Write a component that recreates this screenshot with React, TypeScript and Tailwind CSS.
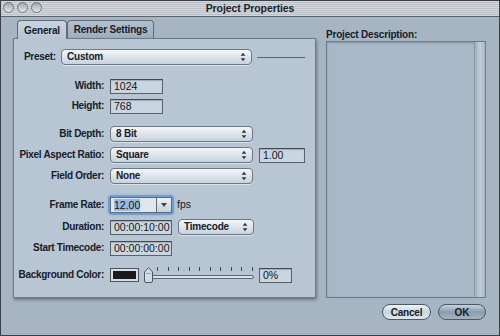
import React from 'react';

const font = { fontFamily: '"Liberation Sans", Arial, sans-serif' };

function Arrows() {
  return (
    <svg width="6" height="10" viewBox="0 0 6 10" className="shrink-0">
      <path d="M3 0.8 L5.3 3.8 L0.7 3.8 Z" fill="#2a3440" />
      <path d="M3 9.2 L5.3 6.2 L0.7 6.2 Z" fill="#2a3440" />
    </svg>
  );
}

function Select({ label, w }: { label: string; w: string }) {
  return (
    <div
      className={`${w} h-[16px] flex items-center justify-between pl-[5px] pr-[5px] rounded-[4px] border border-[#6b7886] bg-gradient-to-b from-[#f4f7fa] via-[#dde4eb] to-[#c9d3dd] shadow-[0_1px_0_rgba(255,255,255,0.5)] text-[10px] tracking-[-0.2px] font-bold text-[#16202a]`}
    >
      <span className="leading-none">{label}</span>
      <Arrows />
    </div>
  );
}

function Field({ value, w }: { value: string; w: string }) {
  return (
    <div
      className={`${w} h-[15px] flex items-center px-[3px] border border-[#56636f] border-t-[#3f4a55] bg-[#cbd5df] shadow-[inset_0_1px_1px_rgba(0,0,0,0.2)] text-[10.5px] text-[#0f1720]`}
    >
      <span className="leading-none">{value}</span>
    </div>
  );
}

function Row({ label, children, mt }: { label: string; children: React.ReactNode; mt: string }) {
  return (
    <div className={`flex items-center h-[16px] ${mt}`}>
      <div className="w-[90px] text-right text-[10px] tracking-[-0.3px] font-bold text-[#16202a] whitespace-nowrap leading-none">
        {label}
      </div>
      <div className="ml-[6px] flex items-center gap-[6px]">{children}</div>
    </div>
  );
}

function Slider() {
  const ticks = [0, 1, 2, 3, 4, 5, 6, 7, 8, 9];
  return (
    <div className="relative w-[110px] h-[16px] -ml-[1px] -mr-[1px]">
      <div className="absolute left-[13px] right-[1px] top-0 flex justify-between">
        {ticks.map((t) => (
          <div key={t} className="w-px h-[4px] bg-[#3c4854]" />
        ))}
      </div>
      <div className="absolute left-[3px] right-0 top-[8px] h-[4px] rounded-full border border-[#5d6a77] bg-[#d9e1e9]" />
      <svg className="absolute left-0 top-0" width="9" height="16" viewBox="0 0 9 16">
        <path d="M4.5 0.5 L8.5 5 L8.5 14 Q8.5 15.5 7 15.5 L2 15.5 Q0.5 15.5 0.5 14 L0.5 5 Z" fill="#d3dbe3" stroke="#4c5865" />
        <path d="M2 6.5 L7 6.5" stroke="#9aa6b2" />
      </svg>
    </div>
  );
}

export default function App() {
  return (
    <div
      className="w-[500px] h-[336px] bg-[#a7b5c3] border border-[#3a4047] flex flex-col overflow-hidden text-[#16202a]"
      style={font}
    >
      {/* title bar */}
      <div className="relative h-[16px] shrink-0 flex items-center justify-center border-b border-[#5b636c] bg-[repeating-linear-gradient(to_bottom,#d3d7db_0px,#d3d7db_1px,#bcc2c8_1px,#bcc2c8_2px)]">
        <div className="absolute left-[2px] top-[1px] flex gap-[3px]">
          {[0, 1, 2].map((i) => (
            <div
              key={i}
              className="w-[11px] h-[11px] rounded-full border border-[#6f7780] bg-gradient-to-b from-[#9ea6ae] to-[#e4e8ec]"
            />
          ))}
        </div>
        <span className="text-[10.5px] tracking-[-0.1px] font-bold text-[#1e2329] leading-none">Project Properties</span>
      </div>

      <div className="flex flex-1">
        {/* left column */}
        <div className="ml-[12px] w-[303px] flex flex-col">
          {/* tabs */}
          <div className="flex items-end h-[18px] ml-[4px] mt-[3px]">
            <div className="h-[19px] w-[50px] flex items-center justify-center rounded-t-[4px] border border-b-0 border-[#5e6b78] bg-gradient-to-b from-[#c9d4de] to-[#b8c5d2] text-[10px] tracking-[-0.2px] font-bold relative top-[1px] z-10">
              General
            </div>
            <div className="h-[18px] w-[87px] flex items-center justify-center rounded-t-[4px] border border-b-0 border-[#5e6b78] bg-gradient-to-b from-[#b3c0cd] to-[#9fadbb] text-[10px] tracking-[-0.2px] font-bold">
              Render Settings
            </div>
          </div>
          {/* panel */}
          <div className="h-[260px] border border-[#6d7a87] bg-[#b8c5d2] shadow-[1px_2px_3px_rgba(0,0,0,0.35)] flex flex-col">
            <div className="flex items-center h-[16px] mt-[10px]">
              <span className="ml-[10px] w-[37px] text-[10px] tracking-[-0.3px] font-bold leading-none">Preset:</span>
              <Select label="Custom" w="w-[191px]" />
              <div className="ml-[5px] w-[48px] h-px bg-[#56626e]" />
            </div>

            <Row label="Width:" mt="mt-[13px]">
              <Field value="1024" w="w-[53px]" />
            </Row>
            <Row label="Height:" mt="mt-[4px]">
              <Field value="768" w="w-[53px]" />
            </Row>

            <Row label="Bit Depth:" mt="mt-[12px]">
              <Select label="8 Bit" w="w-[143px]" />
            </Row>
            <Row label="Pixel Aspect Ratio:" mt="mt-[5px]">
              <Select label="Square" w="w-[143px]" />
              <Field value="1.00" w="w-[46px]" />
            </Row>
            <Row label="Field Order:" mt="mt-[5px]">
              <Select label="None" w="w-[143px]" />
            </Row>

            <Row label="Frame Rate:" mt="mt-[13px]">
              <div className="flex h-[16px] rounded-[2px] shadow-[0_0_0_2px_#6e9ed3,0_0_3px_2px_#8db6e3]">
                <div className="w-[47px] flex items-center px-[3px] border border-[#5e6b78] bg-[#dfe6ee] text-[10.5px] text-[#0f1720]">
                  <span className="bg-[#9ab8dc] leading-none py-[1px]">12.00</span>
                </div>
                <div className="w-[15px] flex items-center justify-center border border-l-0 border-[#5e6b78] bg-gradient-to-b from-[#eef2f6] to-[#c7d1db]">
                  <svg width="6" height="4" viewBox="0 0 6 4">
                    <path d="M0 0 L6 0 L3 4 Z" fill="#3b4550" />
                  </svg>
                </div>
              </div>
              <span className="text-[10.5px] -ml-[1px]">fps</span>
            </Row>
            <Row label="Duration:" mt="mt-[6px]">
              <Field value="00:00:10:00" w="w-[62px]" />
              <Select label="Timecode" w="w-[76px]" />
            </Row>
            <Row label="Start Timecode:" mt="mt-[5px]">
              <Field value="00:00:00:00" w="w-[62px]" />
            </Row>

            <Row label="Background Color:" mt="mt-[11px]">
              <div className="w-[29px] h-[14px] border border-[#4a5560] bg-[#d6dde4] p-[2px]">
                <div className="w-full h-full bg-[#1e1a1b]" />
              </div>
              <Slider />
              <Field value="0%" w="w-[33px]" />
            </Row>
          </div>
        </div>

        {/* right column */}
        <div className="ml-[10px] w-[160px] flex flex-col">
          <div className="mt-[12px] h-[12px] text-[10px] tracking-[-0.2px] font-bold leading-none flex items-center">Project Description:</div>
          <div className="h-[257px] flex border border-[#6d7a87] bg-[#a9b8c6] shadow-[inset_0_1px_2px_rgba(0,0,0,0.2)]">
            <div className="flex-1" />
            <div className="w-[11px] border-l border-[#8a98a6] bg-gradient-to-r from-[#a2b0be] via-[#c2ced9] to-[#a9b7c5]" />
          </div>
          <div className="flex justify-end gap-[7px] mt-[6px]">
            <div className="w-[49px] h-[16px] rounded-full border border-[#4b5866] bg-gradient-to-b from-[#f2f6f9] via-[#c9d4de] to-[#dfe8ef] flex items-center justify-center text-[10px] tracking-[-0.2px] font-bold">
              Cancel
            </div>
            <div className="w-[48px] h-[16px] rounded-full border border-[#4b5866] bg-gradient-to-b from-[#c7d2dc] via-[#8c9cac] to-[#a6b4c2] flex items-center justify-center text-[10px] font-bold">
              OK
            </div>
          </div>
        </div>
      </div>
    </div>
  );
}
